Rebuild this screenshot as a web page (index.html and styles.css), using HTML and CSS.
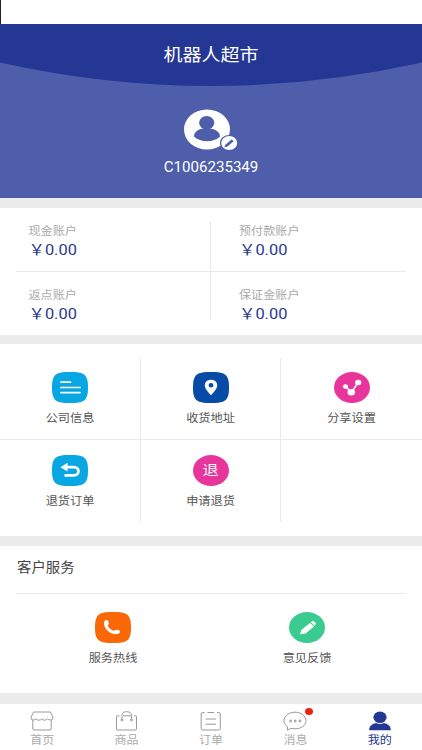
FILE: index.html
```html
<!DOCTYPE html>
<html lang="zh-CN">
<head>
<meta charset="utf-8">
<title>机器人超市</title>
<link rel="stylesheet" href="styles.css">
</head>
<body>
<div class="app">
  <div class="status"></div>
  <header class="hero">
    <svg class="curve" viewBox="0 0 422 62" width="422" height="62"><path d="M0 0H422V38.5Q211 85.5 0 38.5Z" fill="#253794"/></svg>
    <h1 class="title">机器人超市</h1>
    <svg class="avatar" viewBox="0 0 56 42" width="56" height="42">
      <ellipse cx="23" cy="20.5" rx="23" ry="20" fill="#fff"/>
      <ellipse cx="22.7" cy="13.8" rx="7.6" ry="6.8" fill="#4e5eaa"/>
      <path d="M10 27.5C10 21.8 16 19.2 22.5 19.2S36 21.8 36 27.5C32.5 30.8 28 32.2 23 32.2S13.5 30.8 10 27.5Z" fill="#4e5eaa"/>
      <ellipse cx="45.2" cy="34" rx="9.3" ry="8" fill="#4e5eaa"/>
      <ellipse cx="45.2" cy="34" rx="8" ry="6.9" fill="#fff"/>
      <path d="M42 37L48.7 31.2" stroke="#4e5eaa" stroke-width="2.6"/>
      <path d="M40.5 38.3L41 36L43 37.8Z" fill="#4e5eaa"/>
    </svg>
    <div class="uid">C1006235349</div>
  </header>

  <section class="accounts">
    <div class="account"><span class="name">现金账户</span><span class="money">￥0.00</span></div>
    <div class="account"><span class="name">预付款账户</span><span class="money">￥0.00</span></div>
    <div class="account"><span class="name">返点账户</span><span class="money">￥0.00</span></div>
    <div class="account"><span class="name">保证金账户</span><span class="money">￥0.00</span></div>
  </section>

  <section class="menu">
    <div class="row first">
      <div class="item">
        <svg class="icon" viewBox="0 0 36 31"><path class="sky" d="M18 0C32 0 36 2 36 15.5S32 31 18 31S0 29 0 15.5S4 0 18 0Z"/><path class="line" d="M9 10.2H18.5M9 15.5H28M9 20.7H28"/></svg>
        <span class="label">公司信息</span>
      </div>
      <div class="item">
        <svg class="icon" viewBox="0 0 36 31"><path class="navy" d="M18 0C32 0 36 2 36 15.5S32 31 18 31S0 29 0 15.5S4 0 18 0Z"/><path class="white" fill-rule="evenodd" d="M18 23.2C15 20 11.8 16.500 11.8 13.2C11.8 10 14.500 7.8 18 7.8S24.2 10 24.2 13.2C24.2 16.500 21 20 18 23.2ZM18 11A2.4 2.2 0 1 0 18 15.4A2.4 2.2 0 1 0 18 11Z"/></svg>
        <span class="label">收货地址</span>
      </div>
      <div class="item">
        <svg class="icon" viewBox="0 0 36 31"><ellipse class="pink" cx="18" cy="15.5" rx="18" ry="15.5"/><path class="link" d="M11.5 14.5L17.5 20.5L24 10.5"/><ellipse class="white" cx="11.5" cy="14.5" rx="2.6" ry="2.2"/><ellipse class="white" cx="17.3" cy="20.3" rx="3.8" ry="3.3"/><ellipse class="white" cx="24.2" cy="10.5" rx="3.1" ry="2.8"/></svg>
        <span class="label">分享设置</span>
      </div>
    </div>
    <div class="row second">
      <div class="item">
        <svg class="icon" viewBox="0 0 36 31"><path class="sky" d="M18 0C32 0 36 2 36 15.5S32 31 18 31S0 29 0 15.5S4 0 18 0Z"/><path class="back" d="M13 12.2H22C28 12.2 28 20.3 22 20.3H12.5"/><path class="white" d="M8.5 12.2L15.5 7.8V16.6Z"/></svg>
        <span class="label">退货订单</span>
      </div>
      <div class="item">
        <div class="icon refund"><span>退</span></div>
        <span class="label">申请退货</span>
      </div>
      <div class="item"></div>
    </div>
  </section>

  <section class="service">
    <h2 class="heading"><span>客户服务</span></h2>
    <div class="pair">
      <div class="item">
        <svg class="icon" viewBox="0 0 36 31"><path class="orange" d="M18 0C32 0 36 2 36 15.5S32 31 18 31S0 29 0 15.5S4 0 18 0Z"/><path class="white" d="M10.2 8.3C11.5 7.5 13 8.2 13.4 9.6L13.8 11.5C13.9 12.5 12.7 13 12.9 13.8C13.6 16 16.3 18.2 18.7 18.7C19.7 18.9 20 17.8 21.2 17.7L23.5 18.1C25 18.5 25.6 19.9 24.5 21C21.5 23.3 16.5 22 13.2 19.3C9.900 16.6 7.5 11 10.2 8.3Z"/></svg>
        <span class="label">服务热线</span>
      </div>
      <div class="item">
        <svg class="icon" viewBox="0 0 36 31"><ellipse class="green" cx="18" cy="15.5" rx="18" ry="15.5"/><path class="white" d="M11 22.2L12.5 17.8L21 11L25 14.5L16.5 21.5ZM21.8 10.300L23.3 9.1Q24 8.600 24.7 9.2L26.700 11.1Q27.200 11.8 26.500 12.4L25.500 13.700Z"/></svg>
        <span class="label">意见反馈</span>
      </div>
    </div>
  </section>

  <nav class="tabs">
    <div class="tab">
      <svg viewBox="0 0 26 22" width="26" height="22"><path class="stroke" d="M4.500 2H21.500L24 7.500Q24 10 21.500 10Q19.500 10 18.500 8.800Q17.200 10.200 15.500 10.200T12.800 8.800Q11.500 10.200 9.800 10.200T7 8.800Q6 10 4 10Q2 10 2 7.500ZM3.800 10V19Q3.800 20 5 20H21Q22.200 20 22.200 19V10"/></svg>
      <span class="tab-label">首页</span>
    </div>
    <div class="tab">
      <svg viewBox="0 0 26 22" width="26" height="22"><path class="stroke" d="M9 5.800H17M5.500 5.800H3.500Q2.500 5.800 2.500 6.800V19Q2.500 20 3.500 20H21.500Q22.500 20 22.500 19V6.800Q22.500 5.800 21.500 5.800H20M8 9.500V5.500Q8 1.700 12.700 1.700T17.500 5.500V9.500"/><circle class="stroke" cx="8" cy="10" r="1"/><circle class="stroke" cx="17.500" cy="10" r="1"/></svg>
      <span class="tab-label">商品</span>
    </div>
    <div class="tab">
      <svg viewBox="0 0 26 22" width="26" height="22"><path class="stroke" d="M6.500 2.500H5Q3.200 2.500 3.200 4V18.500Q3.200 20 5 20H20.500Q22.300 20 22.300 18.500V4Q22.300 2.500 20.500 2.500H19M9.500 2.500H16M7.500 9H18M7.500 14.200H18"/></svg>
      <span class="tab-label">订单</span>
    </div>
    <div class="tab">
      <svg viewBox="0 0 26 22" width="26" height="22"><path class="stroke" d="M5.500 20.200L5.300 16.500C3.300 14.900 2 13 2 10.700C2 5.800 7 2.200 13 2.200S24 5.800 24 10.700S19 18.800 13 18.800Q10.800 18.800 9 18.300Z"/><circle class="dot" cx="8.600" cy="11" r="1.400"/><circle class="dot" cx="13.200" cy="11" r="1.400"/><circle class="dot" cx="17.900" cy="11" r="1.400"/></svg>
      <i class="badge"></i>
      <span class="tab-label">消息</span>
    </div>
    <div class="tab active">
      <svg viewBox="0 0 26 22" width="26" height="22"><ellipse cx="13" cy="7.300" rx="6.600" ry="5.800"/><path d="M2.200 20.200C2.200 15.700 5.500 14 9 13.100Q13 15.100 17 13.100C20.500 14 23.800 15.700 23.800 20.200Z"/></svg>
      <span class="tab-label">我的</span>
    </div>
  </nav>
</div>
</body>
</html>
```
FILE: styles.css
```css
* { box-sizing: border-box; }
body {
  margin: 0;
  background: #ececec;
  font-family: Roboto, "Noto Sans CJK SC", sans-serif;
  color: #555;
}
.app { width: 422px; height: 750px; display: flex; flex-direction: column; overflow: hidden; }
.status { height: 24px; flex: none; background: #fff; border-left: 1px solid #222; }

.hero {
  position: relative;
  height: 174px;
  flex: none;
  background: #4e5eaa;
  color: #fff;
  display: flex;
  flex-direction: column;
  align-items: center;
}
.curve { position: absolute; left: 0; top: 0; }
.title, .uid, .name, .money, .label, .heading span, .tab-label { transform: scaleY(.92); white-space: nowrap; }
.title { margin: 17px 0 0; font-size: 19px; line-height: 28px; font-weight: 400; z-index: 1; }
.avatar { margin: 40px 0 0 2px; flex: none; }
.uid { margin-top: 6px; font-size: 15.1px; line-height: 20px; }

.accounts {
  margin-top: 10px;
  height: 127px;
  flex: none;
  padding: 13px 16px;
  background: linear-gradient(#e9e9e9, #e9e9e9) 210px 13px / 1px 99px no-repeat #fff;
  display: grid;
  grid-template-columns: 194px 196px;
  grid-template-rows: 51px 50px;
}
.account { display: flex; flex-direction: column; align-items: flex-start; padding: 1px 0 0 12.5px; }
.account:nth-child(even) { padding-left: 29px; }
.account:nth-child(-n+2) { border-bottom: 1px solid #e9e9e9; }
.account:nth-child(n+3) { padding-top: 14px; }
.name { font-size: 12.1px; line-height: 18px; color: #aaa; }
.money { font-size: 16.4px; line-height: 20px; color: #2b3b8e; }

.menu { margin-top: 9px; height: 192px; flex: none; background: #fff; }
.row { height: 96px; display: grid; grid-template-columns: 140px 140px 142px; }
.first { padding-top: 14px; border-bottom: 1px solid #e9e9e9; }
.second { padding-bottom: 14px; }
.item { display: flex; flex-direction: column; align-items: center; }
.row .item + .item { border-left: 1px solid #e9e9e9; }
.first .item { padding-top: 14px; }
.second .item { padding-top: 15px; }
.icon { width: 36px; height: 31px; flex: none; }
.label { margin-top: 5px; font-size: 12.2px; line-height: 20px; }
.sky { fill: #08a6e2; }
.navy { fill: #064ba5; }
.pink { fill: #e8359c; }
.orange { fill: #fa6808; }
.green { fill: #3acb91; }
.white { fill: #fff; }
.line { fill: none; stroke: #fff; stroke-width: 1.7; stroke-linecap: round; }
.link { fill: none; stroke: #fff; stroke-width: 1.5; }
.back { fill: none; stroke: #fff; stroke-width: 2.7; }
.refund { border-radius: 50%; background: #e8359c; color: #fff; text-align: center; font-size: 16px; line-height: 31px; }
.refund span { display: block; transform: scaleY(.87); }

.service { margin-top: 10px; height: 147px; flex: none; padding: 0 16px; background: #fff; }
.heading { margin: 0; height: 48px; border-bottom: 1px solid #e9e9e9; font-size: 14.4px; line-height: 44px; font-weight: 400; color: #444; padding-left: 1px; }
.heading span { display: inline-block; }
.pair { display: grid; grid-template-columns: 194px 194px; padding-top: 18px; }

.tabs { margin-top: 11px; height: 46px; flex: none; background: #fff; display: grid; grid-template-columns: repeat(5, 1fr); }
.tab { position: relative; display: flex; flex-direction: column; align-items: center; padding-top: 6px; color: #aaa; }
.tab-label { margin-top: -1px; font-size: 12px; line-height: 18px; }
.stroke { fill: none; stroke: #999; stroke-width: 1; stroke-linejoin: round; }
.dot { fill: #aaa; }
.active { color: #253794; fill: #253794; }
.badge { position: absolute; left: 52px; top: 4px; width: 8px; height: 7px; border-radius: 50%; background: #eb2410; }
```
